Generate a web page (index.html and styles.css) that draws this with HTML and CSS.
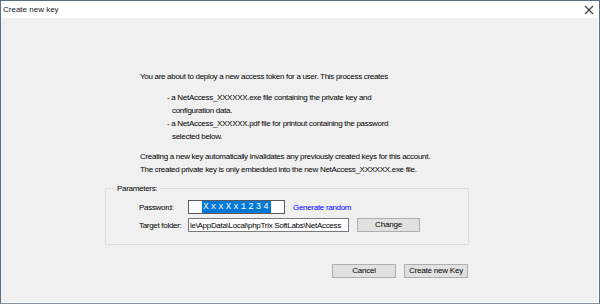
FILE: index.html
```html
<!DOCTYPE html>
<html>
<head>
<meta charset="utf-8">
<link rel="stylesheet" href="styles.css">
</head>
<body>
<div class="window">
  <div class="titlebar">
    <span class="title">Create new key</span>
    <svg class="close" width="10" height="10" viewBox="0 0 10 10"><path d="M1 1 L9 9 M9 1 L1 9" stroke="#3a3a3a" stroke-width="1.1" fill="none"/></svg>
  </div>
  <div class="client">
    <div class="info">
      <p class="line">You are about to deploy a new access token for a user. This process creates</p>
      <ul class="files">
        <li>- a NetAccess_XXXXXX.exe file containing the private key and<br>configuration data.</li>
        <li>- a NetAccess_XXXXXX.pdf file for printout containing the password<br>selected below.</li>
      </ul>
      <p class="line">Creating a new key automatically invalidates any previously created keys for this account.<br>The created private key is only embedded into the new NetAccess_XXXXXX.exe file.</p>
    </div>
    <fieldset class="group">
      <legend class="legend">Parameters:</legend>
      <div class="row">
        <span class="label">Password:</span>
        <div class="field pw"><span class="sel">XxxXx1234</span></div>
        <a class="link">Generate random</a>
      </div>
      <div class="row">
        <span class="label">Target folder:</span>
        <div class="field path">le\AppData\Local\phpTrix SoftLabs\NetAccess</div>
        <button class="btn">Change</button>
      </div>
    </fieldset>
    <div class="actions">
      <button class="btn wide">Cancel</button>
      <button class="btn wide">Create new Key</button>
    </div>
  </div>
</div>
</body>
</html>
```
FILE: styles.css
```css
html, body {
  margin: 0;
  padding: 0;
  background: #f0f0f0;
}
body {
  font-family: "Liberation Sans", Arial, sans-serif;
  font-size: 8px;
  color: #000;
  letter-spacing: -0.3px;
}
.window {
  width: 600px;
  height: 304px;
  box-sizing: border-box;
  border: 1px solid #587185;
  border-bottom-color: #86909a;
  display: flex;
  flex-direction: column;
  background: #f0f0f0;
}
.titlebar {
  height: 17px;
  background: #fff;
  display: flex;
  align-items: center;
  justify-content: space-between;
  padding-left: 2px;
  padding-right: 5px;
  flex: none;
}
.title {
  font-size: 8px;
  letter-spacing: 0;
  color: #1a1a1a;
  line-height: 13px;
}
.close {
  display: block;
}
.client {
  flex: 1;
  background: #f0f0f0;
  border-right: 1px solid #fff;
  border-bottom: 1px solid #fff;
  padding-top: 52px;
}
.info {
  padding-left: 139px;
  line-height: 13px;
  white-space: nowrap;
}
.line {
  margin: 0;
}
.files {
  list-style: none;
  margin: 8px 0 7px 0;
  padding: 0 0 0 32px;
}
.files li {
  text-indent: -5px;
}
.group {
  margin: 6px 0 0 104px;
  width: 364px;
  box-sizing: border-box;
  border: 1px solid #dcdcdc;
  padding: 5px 0 12px 0;
  min-width: 0;
}
.legend {
  margin-left: 9px;
  padding: 0 2px;
  line-height: 13px;
}
.row {
  display: flex;
  align-items: center;
  height: 14px;
  padding-left: 33px;
}
.row + .row {
  margin-top: 4px;
}
.label {
  width: 49px;
  flex: none;
}
.field {
  height: 14px;
  box-sizing: border-box;
  background: #fff;
  border: 1px solid #7a7a7a;
  flex: none;
  display: flex;
  align-items: center;
  overflow: hidden;
  white-space: nowrap;
}
.pw {
  width: 97px;
  border-color: #5a5a5a;
  justify-content: center;
}
.sel {
  background: #0078d7;
  color: #fff;
  font-family: "Liberation Mono", monospace;
  font-size: 9px;
  letter-spacing: 2.1px;
  line-height: 12px;
  padding-left: 1px;
}
.path {
  width: 161px;
  padding-left: 1px;
}
.link {
  color: #0000ff;
  margin-left: 8px;
}
.btn {
  font-family: "Liberation Sans", Arial, sans-serif;
  font-size: 8px;
  letter-spacing: -0.2px;
  color: #000;
  background: #e1e1e1;
  border: 1px solid #adadad;
  height: 14px;
  width: 63px;
  padding: 0;
  margin: 0 0 0 8px;
  line-height: 12px;
}
.actions {
  display: flex;
  margin-top: 19px;
  padding-left: 323px;
}
.btn.wide {
  width: 64px;
  margin-left: 8px;
}
```
